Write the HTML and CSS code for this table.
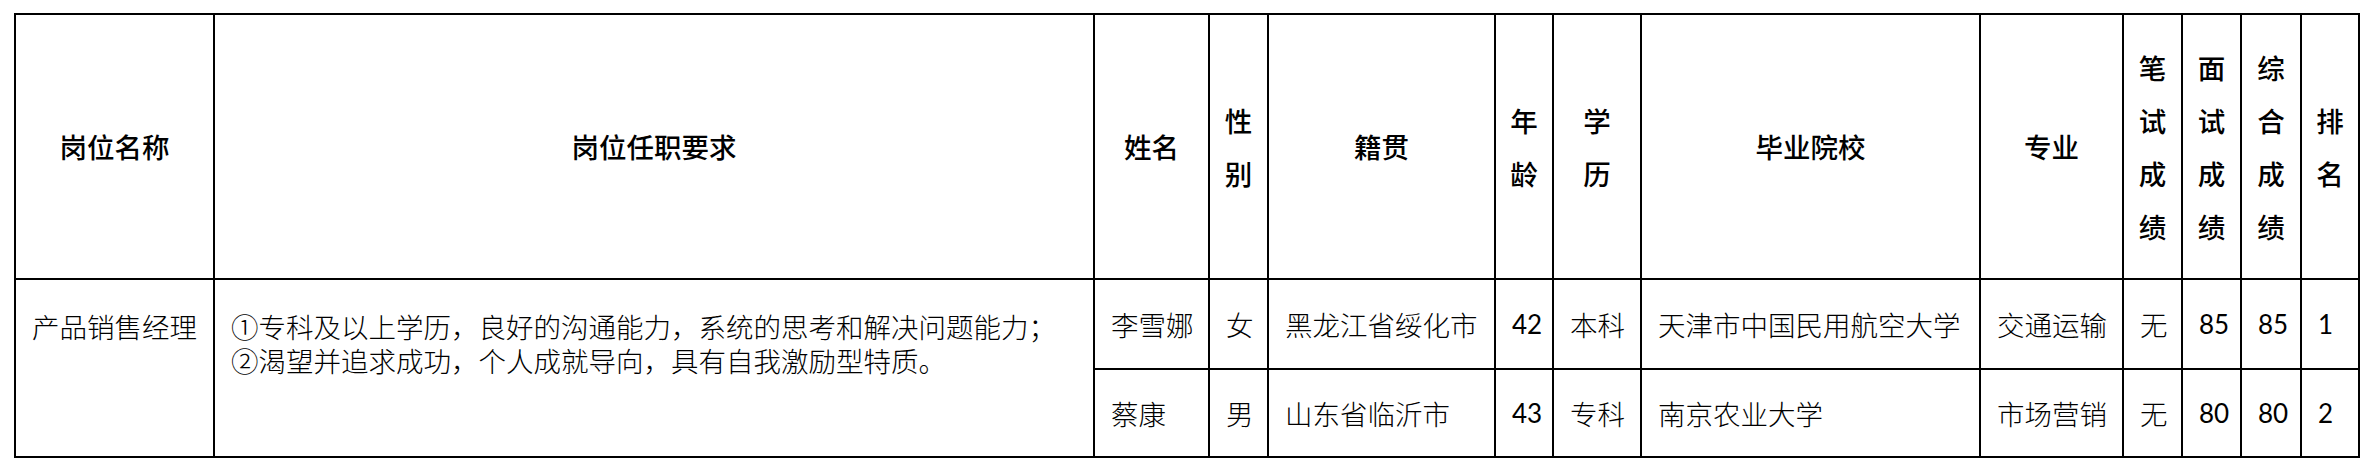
FILE: index.html
```html
<!DOCTYPE html>
<html lang="zh-CN">
<head>
<meta charset="utf-8">
<title>岗位人员名单</title>
<link rel="stylesheet" href="styles.css">
</head>
<body>
<table class="roster">
  <colgroup>
    <col class="w-post">
    <col class="w-req">
    <col class="w-name">
    <col class="w-sex">
    <col class="w-origin">
    <col class="w-age">
    <col class="w-edu">
    <col class="w-school">
    <col class="w-major">
    <col class="w-score">
    <col class="w-score">
    <col class="w-total">
    <col class="w-rank">
  </colgroup>
  <thead>
    <tr class="head-row">
      <th>岗位名称</th>
      <th>岗位任职要求</th>
      <th>姓名</th>
      <th>性<br>别</th>
      <th>籍贯</th>
      <th>年<br>龄</th>
      <th>学<br>历</th>
      <th>毕业院校</th>
      <th>专业</th>
      <th>笔<br>试<br>成<br>绩</th>
      <th>面<br>试<br>成<br>绩</th>
      <th>综<br>合<br>成<br>绩</th>
      <th>排<br>名</th>
    </tr>
  </thead>
  <tbody>
    <tr class="row-a">
      <td class="merged" rowspan="2">产品销售经理</td>
      <td class="merged" rowspan="2">①专科及以上学历，良好的沟通能力，系统的思考和解决问题能力；<br>②渴望并追求成功，个人成就导向，具有自我激励型特质。</td>
      <td>李雪娜</td>
      <td>女</td>
      <td>黑龙江省绥化市</td>
      <td class="num">42</td>
      <td>本科</td>
      <td>天津市中国民用航空大学</td>
      <td>交通运输</td>
      <td>无</td>
      <td class="num">85</td>
      <td class="num">85</td>
      <td class="num">1</td>
    </tr>
    <tr class="row-b">
      <td>蔡康</td>
      <td>男</td>
      <td>山东省临沂市</td>
      <td class="num">43</td>
      <td>专科</td>
      <td>南京农业大学</td>
      <td>市场营销</td>
      <td>无</td>
      <td class="num">80</td>
      <td class="num">80</td>
      <td class="num">2</td>
    </tr>
  </tbody>
</table>
</body>
</html>
```

FILE: styles.css
```css
html, body {
  margin: 0;
  padding: 0;
  background: #ffffff;
}

body {
  padding: 13px 0 0 14px;
  font-family: "Noto Sans CJK SC", "Noto Sans", sans-serif;
  color: #000000;
}

.roster {
  border-collapse: collapse;
  table-layout: fixed;
  width: 2346px;
  border: 2px solid #000;
}

.roster th,
.roster td {
  border: 2px solid #000;
  padding: 0 0 0 16px;
  font-size: 27.5px;
  line-height: 34px;
  text-align: left;
  vertical-align: middle;
  white-space: nowrap;
  overflow: hidden;
}

.roster th {
  font-weight: 500;
  text-align: center;
  padding: 0;
  line-height: 53px;
}

.head-row { height: 265px; }
.row-a { height: 90px; }
.row-b { height: 88px; }

.roster td {
  font-weight: 300;
}

.roster td.merged {
  vertical-align: top;
  padding-top: 29px;
}

.roster td.num {
  font-family: "Lato", "Noto Sans CJK SC", sans-serif;
  font-weight: 400;
  font-size: 26px;
}

.w-post   { width: 199px; }
.w-req    { width: 880px; }
.w-name   { width: 115px; }
.w-sex    { width: 59px; }
.w-origin { width: 227px; }
.w-age    { width: 58px; }
.w-edu    { width: 88px; }
.w-school { width: 339px; }
.w-major  { width: 143px; }
.w-score  { width: 59px; }
.w-total  { width: 60px; }
.w-rank   { width: 58px; }
```
